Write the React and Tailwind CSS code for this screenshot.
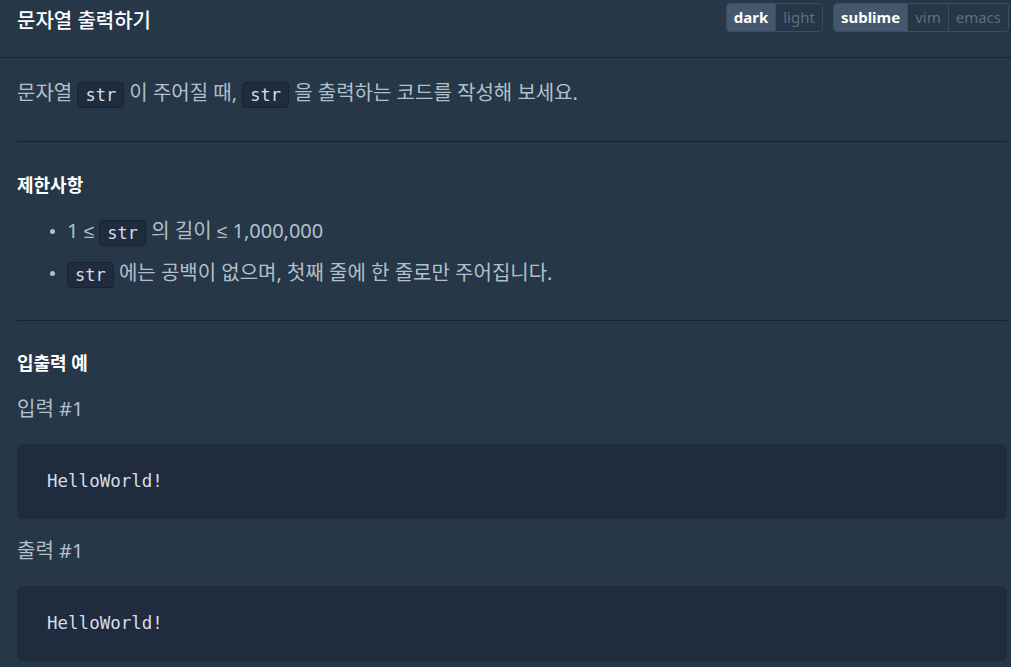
const sans = { fontFamily: '"Noto Sans", "Noto Sans CJK KR", sans-serif' };

function Code({ children }) {
  return (
    <code className="inline-block rounded-[4px] border border-[#172334] bg-[#202b3d] px-[7px] font-['DejaVu_Sans_Mono',monospace] text-[17px] leading-[24px] text-[#d4dee8] align-middle">
      {children}
    </code>
  );
}

function Le() {
  return <span className="font-['Liberation_Sans',sans-serif] text-[19px]">≤</span>;
}

function Toggle({ items, active }) {
  return (
    <div className="flex overflow-hidden rounded-[4px] border border-[#3b4d60]">
      {items.map((item, i) => (
        <span
          key={item}
          className={
            (item === active
              ? 'bg-[#44576c] font-bold text-white '
              : 'bg-[#263747] text-[#5a6f82] ') +
            (i > 0 ? 'border-l border-[#3b4d60] ' : '') +
            'px-[7px] text-[15px] leading-[27px]'
          }
        >
          {item}
        </span>
      ))}
    </div>
  );
}

function Bullet({ children }) {
  return (
    <li className="flex items-center">
      <span className="mr-[12px] h-[5px] w-[5px] rounded-full bg-[#b2c0cc]" />
      <span>{children}</span>
    </li>
  );
}

function Sample({ label, value }) {
  return (
    <div>
      <p className="mt-[17px] text-[20px] leading-[30px] text-[#b2c0cc]">{label}</p>
      <pre className="mt-[20px] rounded-[6px] bg-[#202b3d] px-[30px] py-[25px] font-['DejaVu_Sans_Mono',monospace] text-[17.5px] leading-[25px] text-[#d4dee8]">
        {value}
      </pre>
    </div>
  );
}

export default function App() {
  return (
    <div className="min-h-[667px] w-[1011px] bg-[#263747]" style={sans}>
      <header className="flex h-[58px] items-start justify-between border-b border-[#172334] pl-[17px] pr-[2px]">
        <h1 className="pt-[6px] text-[20px] font-medium leading-[30px] text-white">문자열 출력하기</h1>
        <div className="flex gap-[10px] pt-[3px]">
          <Toggle items={['dark', 'light']} active="dark" />
          <Toggle items={['sublime', 'vim', 'emacs']} active="sublime" />
        </div>
      </header>

      <main className="pl-[17px] pr-[4px]">
        <section className="border-b border-[#172334] pb-[32px] pt-[19px]">
          <p className="text-[20px] leading-[32px] text-[#b2c0cc]">
            문자열 <Code>str</Code> 이 주어질 때, <Code>str</Code> 을 출력하는 코드를 작성해 보세요.
          </p>
        </section>

        <section className="border-b border-[#172334] pb-[31px] pt-[29px]">
          <h2 className="text-[18px] font-bold leading-[28px] text-white">제한사항</h2>
          <ul className="mt-[16px] flex flex-col gap-[9px] pl-[33px] text-[20px] leading-[32px] text-[#b2c0cc]">
            <Bullet>
              1 <Le /> <Code>str</Code> 의 길이 <Le /> 1,000,000
            </Bullet>
            <Bullet>
              <Code>str</Code> 에는 공백이 없으며, 첫째 줄에 한 줄로만 주어집니다.
            </Bullet>
          </ul>
        </section>

        <section className="pb-[6px] pt-[28px]">
          <h2 className="mb-[2px] text-[18px] font-bold leading-[28px] text-white">입출력 예</h2>
          <Sample label="입력 #1" value="HelloWorld!" />
          <Sample label="출력 #1" value="HelloWorld!" />
        </section>
      </main>
    </div>
  );
}
